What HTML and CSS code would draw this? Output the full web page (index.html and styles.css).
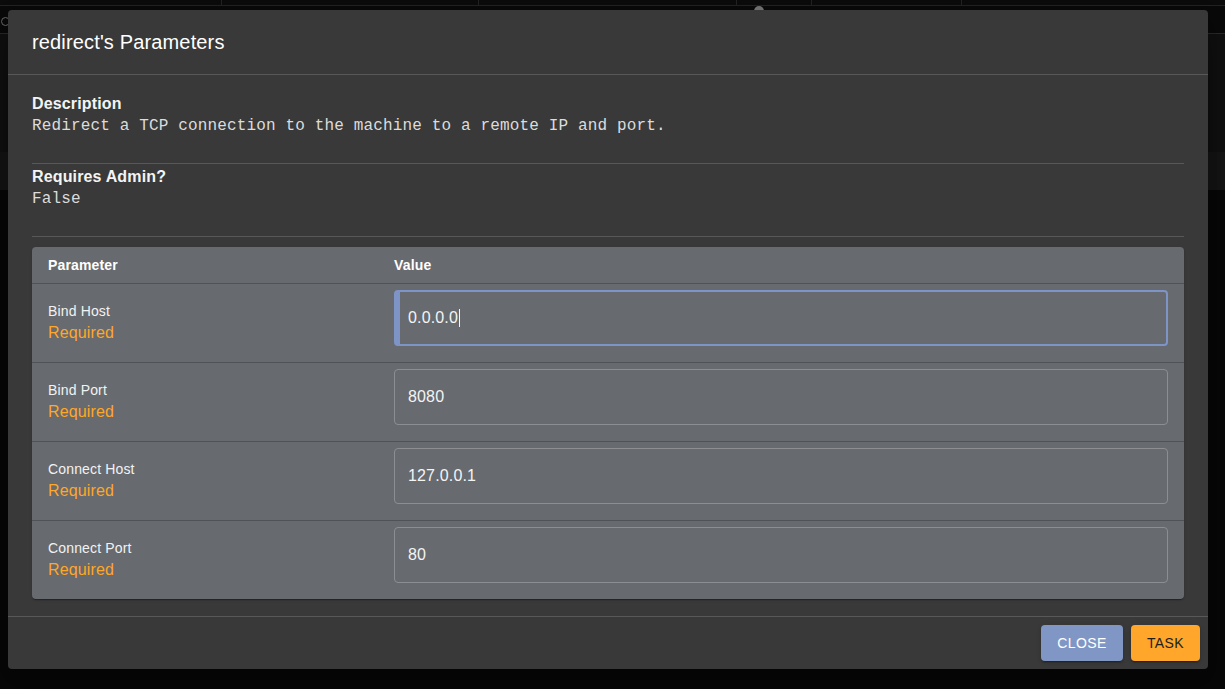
FILE: index.html
```html
<!DOCTYPE html>
<html>
<head>
<meta charset="utf-8">
<link rel="stylesheet" href="styles.css">
</head>
<body>
<div class="page">
  <div class="topbar">
    <span class="col c1"></span><span class="col c2"></span><span class="col c3"></span><span class="col c4"></span><span class="col c5"></span>
  </div>
  <div class="band1"><span class="ring"></span><span class="thumb"></span></div>
  <div class="band2"></div>
  <div class="band3"></div>
  <div class="rest"></div>
</div>

<div class="dialog">
  <div class="dialog-title">redirect's Parameters</div>
  <div class="dialog-content">
    <div class="block">
      <div class="block-head">Description</div>
      <div class="block-text">Redirect a TCP connection to the machine to a remote IP and port.</div>
    </div>
    <div class="block">
      <div class="block-head">Requires Admin?</div>
      <div class="block-text">False</div>
    </div>
    <div class="table">
      <div class="row head">
        <div class="cell name">Parameter</div>
        <div class="cell value">Value</div>
      </div>
      <div class="row">
        <div class="cell name"><div class="pname">Bind Host</div><div class="req">Required</div></div>
        <div class="cell value"><div class="input focused">0.0.0.0<span class="caret"></span></div></div>
      </div>
      <div class="row">
        <div class="cell name"><div class="pname">Bind Port</div><div class="req">Required</div></div>
        <div class="cell value"><div class="input">8080</div></div>
      </div>
      <div class="row">
        <div class="cell name"><div class="pname">Connect Host</div><div class="req">Required</div></div>
        <div class="cell value"><div class="input">127.0.0.1</div></div>
      </div>
      <div class="row last">
        <div class="cell name"><div class="pname">Connect Port</div><div class="req">Required</div></div>
        <div class="cell value"><div class="input">80</div></div>
      </div>
    </div>
  </div>
  <div class="dialog-actions">
    <button class="btn close">Close</button>
    <button class="btn task">Task</button>
  </div>
</div>
</body>
</html>
```

FILE: styles.css
```css
* { box-sizing: border-box; }
html, body { margin: 0; padding: 0; }
body {
  width: 1225px;
  height: 689px;
  overflow: hidden;
  background: #080808;
  font-family: "Liberation Sans", Arial, sans-serif;
  position: relative;
}
.page { display: flex; flex-direction: column; height: 689px; }
.topbar {
  height: 6px;
  background: #0c0c0c;
  border-bottom: 1px solid #232323;
  position: relative;
}
.col { position: absolute; top: 0; width: 1px; height: 5px; background: #242424; }
.c1 { left: 221px; } .c2 { left: 478px; } .c3 { left: 736px; } .c4 { left: 811px; } .c5 { left: 961px; }
.band1 {
  height: 28px;
  background: #0a0a0a;
  border-bottom: 1px solid #2a2a2a;
  position: relative;
}
.ring { position: absolute; left: 1px; top: 11px; width: 9px; height: 9px; border: 1px solid #6a6a6a; border-radius: 50%; }
.thumb { position: absolute; left: 754px; top: 0; width: 10px; height: 10px; border-radius: 50%; background: #777; }
.band2 { height: 118px; background: #101010; }
.band3 { height: 38px; background: #151515; }
.rest { flex: 1; background: #080808; }

.dialog {
  position: absolute;
  left: 8px;
  top: 10px;
  width: 1200px;
  background: #393939;
  border-radius: 4px;
  box-shadow: 0 11px 15px -7px rgba(0,0,0,.2), 0 24px 38px 3px rgba(0,0,0,.14), 0 9px 46px 8px rgba(0,0,0,.12);
  display: flex;
  flex-direction: column;
  color: #fff;
  letter-spacing: 0.15px;
}
.dialog-title {
  padding: 16px 24px;
  font-size: 20px;
  line-height: 32px;
  font-weight: 400;
  color: #fff;
  border-bottom: 1px solid #585858;
}
.dialog-content {
  padding: 16px 24px 17px;
  border-bottom: 1px solid #585858;
}
.block {
  padding: 3px 0 26px;
  border-bottom: 1px solid #585858;
}
.block-head {
  font-size: 16px;
  font-weight: 700;
  line-height: 19px;
  color: #f4f4f4;
}
.block-text {
  font-family: "Liberation Mono", "Courier New", monospace;
  font-size: 16px;
  line-height: 24px;
  padding-top: 1px;
  margin-bottom: -1px;
  letter-spacing: 0.15px;
  color: #dcdcdc;
  white-space: pre;
}
.table {
  margin-top: 10px;
  background: #676a6f;
  border-radius: 4px;
  box-shadow: 0 2px 1px -1px rgba(0,0,0,.2), 0 1px 1px 0 rgba(0,0,0,.14), 0 1px 3px 0 rgba(0,0,0,.12);
  overflow: hidden;
}
.row {
  display: flex;
  border-bottom: 1px solid #4f5256;
  height: 79px;
}
.row.head { height: 37px; }
.row.last { border-bottom: 0; height: 78px; }
.cell { padding: 0 16px; }
.cell.name { width: 346px; }
.cell.value { flex: 1; }
.row.head .cell {
  font-size: 14px;
  font-weight: 700;
  line-height: 36px;
  color: #fff;
}
.row .cell.name { padding-top: 18px; }
.row.head .cell.name { padding-top: 0; }
.pname { font-size: 14px; line-height: 18px; color: #f2f2f2; }
.req { font-size: 16px; line-height: 24px; color: #ffa726; margin-top: 1px; }
.row .cell.value { padding-top: 6px; }
.row.head .cell.value { padding-top: 0; }
.input {
  height: 56px;
  border: 1px solid #8c8e92;
  border-radius: 4px;
  padding: 0 13px;
  font-size: 16px;
  line-height: 54px;
  color: #f4f4f4;
  display: flex;
  align-items: center;
}
.input.focused {
  border: 2px solid #7f94c6;
  border-left-width: 6px;
  padding-left: 8px;
}
.caret { display: inline-block; width: 1px; height: 18px; background: #f4f4f4; margin-left: 1px; }
.dialog-actions {
  display: flex;
  justify-content: flex-end;
  gap: 8px;
  padding: 8px;
}
.btn {
  height: 36px;
  border: 0;
  border-radius: 4px;
  font-family: "Liberation Sans", Arial, sans-serif;
  font-size: 14px;
  font-weight: 400;
  letter-spacing: 0.4px;
  text-transform: uppercase;
  padding: 0;
  box-shadow: 0 3px 1px -2px rgba(0,0,0,.2), 0 2px 2px 0 rgba(0,0,0,.14), 0 1px 5px 0 rgba(0,0,0,.12);
}
.btn.close { background: #8097c5; color: #fff; width: 82px; }
.btn.task { background: #ffa62b; color: #1e1e1e; width: 69px; }
```
